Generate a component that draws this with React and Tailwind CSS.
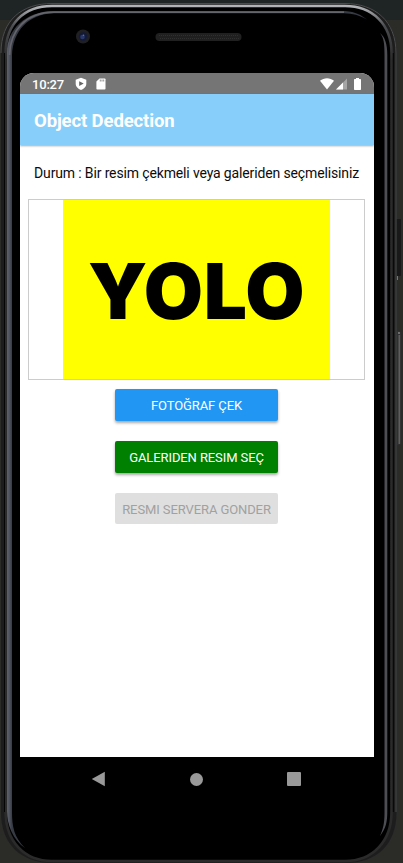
import React from "react";

function Bezel() {
  return (
    <svg className="absolute inset-0" width="403" height="863" viewBox="0 0 403 863" fill="none" aria-hidden="true">
      <defs>
        <linearGradient id="rim" x1="0" y1="0" x2="0" y2="863" gradientUnits="userSpaceOnUse">
          <stop offset="0" stopColor="#c4c5c8" />
          <stop offset="0.01" stopColor="#a9aaad" />
          <stop offset="0.03" stopColor="#4b4c4f" />
          <stop offset="0.07" stopColor="#2b2b2c" />
          <stop offset="1" stopColor="#2b2b2c" />
        </linearGradient>
        <linearGradient id="leftEdge" x1="7" y1="0" x2="12" y2="0" gradientUnits="userSpaceOnUse">
          <stop offset="0" stopColor="#5b606b" />
          <stop offset="0.4" stopColor="#525762" />
          <stop offset="1" stopColor="#363a43" />
        </linearGradient>
      </defs>
      <rect x="395" y="219" width="6" height="57" rx="1" fill="#191919" />
      <path d="M397.500 276v4" stroke="#777" />
      <rect x="395" y="331" width="6" height="114" rx="2" fill="#303030" />
      <path d="M399.300 335v109" stroke="#5e5e5e" strokeWidth="1.600" />
      <path d="M398 333h2" stroke="#aaa" />
      <path d="M1 53C1 20 22 3 52 3H345C375 3 396.500 21 396.500 53V812C396.500 845 376 863 346 863H52C22 863 1 845 1 812Z" fill="#1d1d1e" />
      <path d="M396 53V812M1 53C1 20 22 3.500 52 3.500H345C375 3.500 396 21 396 53" stroke="#4b4c4d" />
      <path d="M5.700 53C5.700 24 24 6 52 6H345C372 6 391.500 24 391.500 53V812C391.500 841 373 861 345 861H52C24 861 5.700 841 5.700 812Z" stroke="url(#rim)" strokeWidth="2.600" fill="#000" />
      <path d="M4.500 53V812M393.300 53V812" stroke="#050505" />
      <path d="M7 53C7 29 25 12 53 11H345C356 12 361 15 367 19.500C359 15 353 13.500 344 13.200H54C28 14 13 31 12 55V811C12 827 14 837 25 848C13 840 7 825 7 811Z" fill="url(#leftEdge)" />
      <path d="M9.500 55C10 30 26 12.500 54 12.200H344" stroke="#64646c" strokeWidth="1.800" />
      <path d="M380 33C384 38 384.500 44 384.500 55V813C384.500 824 383 829 380 836C386 828 387.300 822 387.300 811V55C387.300 44 385 37 380 33Z" fill="#4d4d54" />
      <circle cx="83" cy="36.500" r="7" fill="#202023" />
      <circle cx="83" cy="36.500" r="4.200" fill="#111a38" />
      <circle cx="82.500" cy="37" r="2.300" fill="#293869" />
      <circle cx="83.500" cy="35.300" r="0.800" fill="#6470a0" />
      <rect x="155.500" y="33" width="86" height="8" rx="4" fill="#202020" />
      <path d="M159 35.500H239M160 38.500H239" stroke="#303030" strokeDasharray="1 1" />
    </svg>
  );
}

function StatusBar() {
  return (
    <div className="flex h-[21px] items-center bg-[#757575] pl-[12px] pr-[13px] text-white">
      <span className="w-[34px] whitespace-nowrap pt-px text-[13px] font-medium leading-[21px] tracking-[-0.2px]">10:27</span>
      <svg className="ml-[9px]" width="12" height="14" viewBox="0 0 12 14">
        <path d="M6 .7 11.300 2.700V7c0 2.700-2.300 4.800-5.300 6C3 11.800.7 9.700.7 7V2.700Z" fill="#fff" />
        <path d="M4.200 4.200 8.700 6.600 4.200 9Z" fill="#666" />
      </svg>
      <svg className="ml-[9px]" width="10" height="12" viewBox="0 0 10 12">
        <path d="M3.500.5H8.700q.8 0 .8.800V10.700q0 .8-.8.800H1.200q-.8 0-.8-.8V3.600Z" fill="#fff" />
        <path d="M4.300 1.500v2M6 1.500v2M7.700 1.500v2" stroke="#757575" strokeWidth=".8" />
      </svg>
      <svg className="ml-auto" width="14" height="12" viewBox="0 0 14 12">
        <path d="M0 2.800C4-.6 10-.6 14 2.800L7 11.500Z" fill="#fff" />
      </svg>
      <svg className="ml-[2px]" width="11" height="12" viewBox="0 0 11 12">
        <path d="M11 .5V11.500H0Z" fill="#a6a6a6" />
        <path d="M7 4.500v7H0Z" fill="#fff" />
      </svg>
      <svg className="ml-[7px]" width="7" height="12" viewBox="0 0 7 12">
        <path d="M2 0H5V1H6.300q.7 0 .7.700V11.300q0 .7-.7.700H.7Q0 12 0 11.300V1.700Q0 1 .7 1H2Z" fill="#fff" />
      </svg>
    </div>
  );
}

export default function App() {
  return (
    <div className="relative h-[863px] w-[403px] overflow-hidden bg-[linear-gradient(#1f2525_0_20px,#2b2b28_20px)] font-[Roboto,sans-serif]">
      <Bezel />
      <div className="relative ml-5 w-[354px] pt-[73px]">
        <main className="h-[684px] overflow-hidden rounded-t-[14px] bg-white">
          <StatusBar />
          <header className="relative flex h-[51px] items-center bg-[#87cefa] pl-[14px] shadow-[0_1px_2px_rgba(0,0,0,0.35)]">
            <h1 className="whitespace-nowrap pt-[5px] text-[18.5px] font-bold tracking-[-0.12px] text-white">Object Dedection</h1>
          </header>
          <p className="mt-[18px] whitespace-nowrap pl-[14px] text-[14px] leading-5 tracking-[-0.14px] text-[#0c0c0c]">
            Durum : Bir resim çekmeli veya galeriden seçmelisiniz
          </p>
          <div className="ml-2 mt-4 flex h-[181px] w-[337px] justify-center border border-[#cccccc]">
            <div className="flex w-[267px] items-center justify-center bg-[#ffff00] pt-[3px] font-[Inter,sans-serif] text-[76.5px] font-black leading-none tracking-[0.5px] text-black">
              YOLO
            </div>
          </div>
          <div className="ml-[95px] mt-[9px] flex w-[163px] flex-col gap-5 text-[13px] tracking-[-0.1px]">
            <button className="h-8 whitespace-nowrap rounded-[2px] bg-[#2196f3] pt-px text-white shadow-[0_2px_3px_rgba(0,0,0,0.35)]">FOTOĞRAF ÇEK</button>
            <button className="h-8 whitespace-nowrap rounded-[2px] bg-[#008000] pt-px text-white shadow-[0_2px_3px_rgba(0,0,0,0.35)]">GALERIDEN RESIM SEÇ</button>
            <button className="h-[31px] whitespace-nowrap rounded-[2px] bg-[#dfdfdf] pt-[2px] text-[#a1a1a1]">RESMI SERVERA GONDER</button>
          </div>
        </main>
        <nav className="flex h-[44px] items-center justify-between pl-[71px] pr-[73px]">
          <svg width="14" height="16" viewBox="0 0 14 16">
            <path d="M13.800.8v14.400L.8 8Z" fill="#999" />
          </svg>
          <span className="size-[13px] rounded-full bg-[#999]" />
          <span className="size-[14px] rounded-[1px] bg-[#999]" />
        </nav>
      </div>
    </div>
  );
}
